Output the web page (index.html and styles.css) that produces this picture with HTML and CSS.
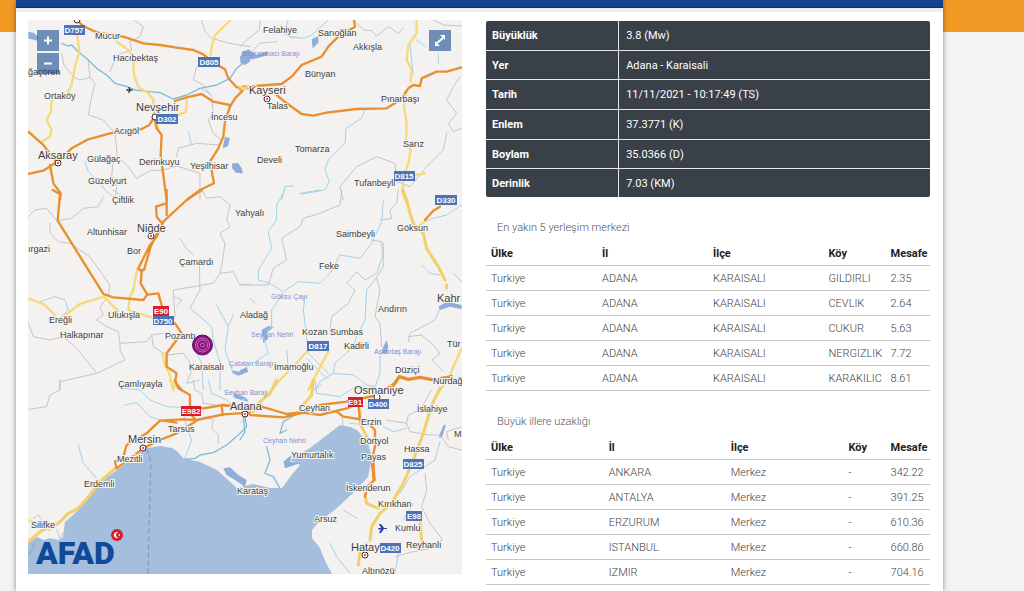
FILE: index.html
```html
<!DOCTYPE html>
<html lang="tr">
<head>
<meta charset="utf-8">
<title>AFAD Deprem Bilgisi</title>
<link rel="stylesheet" href="styles.css">
</head>
<body>
<div class="page">
<main class="panel">
<div class="topbar"></div>
<div class="content">
<section class="map">
<svg class="map-canvas" viewBox="28 20 434 554" role="img" aria-label="Harita">
  <rect class="land" x="28" y="20" width="434" height="554"/>
  <path class="sea" d="M28 574V543L37 537 44 540 50 538 58 540 63 537 65 522 72 516 80 508 95 488 106 478 117 470 133 458 147 448 160 446 172 448 178 452 183 458 200 462 217 470 237 488 253 484 270 488 282 488 290 477 300 465 290 460 310 448 327 435 340 425 350 427 357 430 368 443 372 458 368 477 353 493 337 508 318 523 312 530 312 538 320 548 325 561 332 574Z"/>
  <path class="ferry" d="M147 449L151 462 150 490 148 574"/>
  <path class="ferry" d="M29 555L36 541"/>

  <g transform="scale(.3333)">
    <path class="lake" d="M85 95L100 98 115 110 112 122 95 118 85 116ZM735 155L750 150V185L735 195 722 190 720 170ZM675 410L690 415 684 438 668 445ZM697 490L715 490 725 505 728 520 708 518 696 505Z"/>
    <path class="border" d="M185 160L192 195 220 230 240 240 270 232 285 250 275 290 265 345 310 360 345 400 352 470 385 500 410 535 450 512 490 510 530 498 600 520 600 600M265 185L270 232M405 62L430 80 420 110 390 125 395 150 350 165 330 215M605 60L615 95 635 115 690 130 750 140M590 200L580 240 610 255 635 290 640 340 625 360 640 400 665 420M530 470L535 445 590 430 660 435M340 475L335 530 350 560 345 600"/>
    <path class="river" d="M565 395L575 435M255 485L265 515 290 540 320 575 355 600M600 265L630 280"/>
    <path class="river thick" d="M185 130L205 138 215 135 235 155 265 180 290 205 320 225 345 250 375 258 405 270 450 275 480 278 520 297 560 285 600 265 650 255 690 235 710 205 735 185"/>
    <path class="yellow" d="M232 105L238 155 225 200 215 255 195 290M350 125L385 150 400 175 402 225 415 260 445 280 460 300 462 345 475 385M155 300L153 335 140 360 155 390 150 410 125 425M690 62L645 105 635 140 632 165M560 300L558 335 535 345"/>
    <path class="orange" d="M230 60L250 78 290 97 370 110 430 130 480 135 530 143 580 150 610 163 640 188 675 208 685 235 710 262 750 266M728 272L705 295 690 320 675 365 670 410 655 445 630 485 642 550 600 570 560 600M525 303L560 292 605 282 640 305 690 315M85 395L130 435 170 488 215 445 265 418 330 400 390 392 425 387 448 375 462 352M462 352L470 385 485 405 482 465 500 600M85 522L130 512 165 490M150 495L160 550 182 580 180 600"/>
    <path class="yellow" d="M738 262H750"/>
  </g>
  <g transform="translate(240 0) scale(.3333)">
    <path class="lake" d="M215 118L235 108 235 128 218 145ZM5 158L25 148 50 165 80 155 85 165 50 175 20 180 5 190ZM0 510H7V520H0Z"/>
    <path class="border" d="M60 62L58 90 20 120 0 140M145 60L130 100 160 115M350 70L370 90 395 92 410 108 445 80 475 100 490 85M580 60L610 75 665 78M660 230L640 260 620 300 650 340 625 370 640 395 665 385M620 400L610 450 560 500 510 560 470 545 465 490 410 470 350 500 300 560 310 600M30 160L60 130 110 125"/>
    <path class="river" d="M265 60L215 105 190 115 150 110M375 330L365 355 318 385 315 430 265 480 255 510 268 545 255 570 185 582M160 558L135 560 125 600M530 120L560 142M510 130L515 180 520 220M595 160V190"/>
    <path class="yellow" d="M530 62L530 100 505 135 500 180 515 210 512 245M500 275L492 320 500 370 498 420 512 450 505 490 490 530 488 575 495 600M525 525L555 520"/>
    <path class="orange" d="M0 268L10 260 85 255 125 252 155 230 185 195 245 170 265 140 295 110 345 80 342 60M110 285L140 310 185 342 220 347 260 338 350 327 440 325 480 300 505 265 520 255 540 258 545 235 590 215 620 215 665 202"/>
    <path class="yellow" d="M0 262L18 266M18 258L30 262"/>
  </g>
  <g transform="translate(0 190) scale(.3333)">
    <path class="lake" d="M695 540L715 545 740 530 745 545 715 557 698 550Z"/>
    <path class="border" d="M85 80L105 60 140 55 170 92 215 85 250 55 295 50 310 20M150 100L150 130 175 155 210 160 270 200 305 250 330 285 325 315M320 325L300 350 310 375 290 390 320 410 355 425 360 460 440 455 455 435 490 430M85 400L100 440 150 450 190 440 230 475 290 550 375 510 360 480 360 460M290 550L180 575 178 600M605 0L620 25 660 20 690 45 680 90 690 110 660 130 675 160 665 230 660 250 700 245 720 285 750 285M660 250L640 280 580 290 520 300 525 380M455 435L460 470 500 495 550 490 580 530 560 580 600 570M530 350L545 330 525 320"/>
    <path class="river" d="M540 145L555 170 580 195M598 220L600 300 570 355 600 380 635 410 640 450 660 520 660 600M650 345L685 410 700 375M685 410L675 480 700 550M120 335L165 320 195 330 205 360 180 385M585 480L605 520 610 600M340 0L370 20"/>
    <path class="yellow" d="M85 326L130 342 165 375M190 380L240 342 312 320 355 365M412 235L400 300 390 320 385 360 455 382M487 490L495 525 508 550 520 600"/>
    <path class="orange" d="M158 0L180 12 173 92 310 312 340 322 430 330 442 314 475 310 485 345 490 380M525 400L545 430 500 490 500 530 530 550 525 575 545 600M500 0L500 75M498 40L468 50 470 80 485 98M605 0L560 30 490 95 470 140 450 165 430 205 415 235 425 245 422 280 442 314M480 110L452 170 432 240 418 240"/>
  </g>
  <g transform="translate(240 190) scale(.3333)">
    <path class="lake" d="M65 420L85 408 100 412 80 430 85 445 70 460ZM430 470L440 450 445 470 440 490 425 490ZM595 350L620 335 665 345V358L630 350 600 360ZM0 540L20 535 5 555Z"/>
    <path class="border" d="M305 0L300 45 240 70 190 85 180 110 125 145 140 210 100 235 85 285 30 285 0 282M475 0L470 40 450 60 455 85 420 90M395 150L425 155 428 200 410 250 375 270 350 245 320 280 345 300 325 340 275 380 270 420M410 265L420 300 405 380 420 400 425 470M505 440L545 435 580 465 600 490 575 510 610 545M640 250L665 275"/>
    <path class="river" d="M135 0L110 45 110 90 85 125 95 175 55 240 55 270 90 280 130 305 175 275 240 280 270 250 300 195 360 205 395 160 425 95 430 30M180 10L240 0M195 320L190 360 200 440 205 490 265 550M430 160L430 230 405 270 380 300 375 390 350 440 340 470 285 520 280 550 240 575 225 600M545 225L570 250 600 255M555 95L580 85 620 75 665 45M600 355L585 390 510 430 505 455M30 325L45 340M130 310L95 360 95 410 70 440 85 490 40 520M140 480L145 540M280 550L340 555 380 585 405 590 420 550 420 490M200 505L260 565"/>
    <path class="yellow wide" d="M488 0L500 30 510 70 520 100 550 130 560 175 595 230 615 270M620 285V295"/>
    <path class="yellow" d="M540 105L560 90M200 485L160 530 120 570 95 600M265 485L225 560 205 600M665 475L640 530 625 570 600 600"/>
    <path class="orange" d="M555 90L580 62 600 50"/>
    <path class="orange wide" d="M450 600L478 560 505 568 540 562 580 570 635 560"/>
  </g>
  <g transform="translate(0 380) scale(.3333)">
    <path class="lake" d="M670 265L690 262 715 285 740 300 735 320 705 300 680 285Z"/>
    <path class="lake" d="M700 40L720 45 740 55 745 65 705 55Z"/>
    <path class="border" d="M180 0L180 30 150 45 140 80 85 88M580 0L585 30 605 40 610 70 680 80M615 110L640 120 635 145 655 165 655 190M100 415L115 405 125 418M170 450L180 475 195 450"/>
    <path class="river" d="M370 25L420 30 450 60 500 80 545 82M375 75L410 68 450 110 490 122M235 195L250 250 290 295M550 100L560 140 575 180 555 235M625 0L635 40 680 60 700 80"/>
    <path class="river thick" d="M555 238L585 235 600 225 640 218 680 195 715 165 740 140 735 110"/>
    <path class="yellow wide" d="M85 485L125 452 175 430 205 400 235 385 270 345 300 305 345 265"/>
    <path class="yellow" d="M85 420L115 432 150 450M510 0L525 20"/>
    <path class="orange" d="M525 0L535 25 570 45 570 80 610 85 670 75 750 85M665 75L668 105M750 98L670 103 590 120 545 118 480 122 440 160 380 195 370 230 345 245 350 265 390 235 430 205 480 180 530 160 590 122 570 100M490 122L530 128"/>
  </g>
  <g transform="translate(240 380) scale(.3333)">
    <path class="lake" d="M598 165L612 133 617 137 607 170 598 175ZM130 245L155 225 150 245 180 250 135 265Z"/>
    <path class="border" d="M305 110L310 135M440 120L500 130 510 155 570 165 600 165 625 200 665 210M500 130L505 105 540 90 575 30M665 140L620 155 625 180M555 280L560 330 545 380 570 430 605 475 600 500 520 515 465 530M0 130L20 110M330 130L380 135"/>
    <path class="river" d="M5 60L20 55M225 0L230 40 300 50 340 25 400 25M220 30L245 15M600 185L585 240 510 290 480 340M430 140L460 155 500 145M270 490L290 530 330 580M310 390L350 415M475 520L465 580M490 420L520 370"/>
    <path class="river thick" d="M165 105L130 125 120 160 140 150M80 200L90 240 75 280 100 290 120 325M10 110L15 155 0 180"/>
    <path class="yellow wide" d="M110 0L90 40 60 65 40 95M220 0L215 45 185 80M600 25L575 75 550 160 520 240 490 310 455 370 420 400 395 440 390 480M540 430L545 480M375 345L380 370 415 385M360 90L360 130 385 180M360 520L355 555"/>
    <path class="orange" d="M30 85L65 80 140 102 180 97 240 75 320 65 400 48 440 25 470 5M30 105L130 112 190 98 240 105 320 85 345 75M290 95L310 110 375 120 405 150 405 200 395 240 403 300 382 320 375 350M355 70L360 120"/>
    <path class="orange wide" d="M398 235L402 300"/>
  </g>

  <g class="town">
    <circle cx="77" cy="20" r="3"/><circle cx="58" cy="163" r="3"/><circle cx="155" cy="117" r="3"/><circle cx="267" cy="99" r="3"/><circle cx="151" cy="236" r="3"/><circle cx="143" cy="448" r="3"/><circle cx="245" cy="414" r="3"/><circle cx="365" cy="555" r="3"/><circle cx="377" cy="397" r="3"/>
  </g>
  <g class="town-dot">
    <circle cx="58" cy="163" r="1"/><circle cx="267" cy="99" r="1"/><circle cx="151" cy="236" r="1"/><circle cx="143" cy="448" r="1"/><circle cx="245" cy="414" r="1"/><circle cx="365" cy="555" r="1"/>
  </g>
  <path class="plane" d="M126 89L129 89.500 128 87H129L131 89.500H133V90.500H131L129 93H128L129 90.500 127 91Z"/>
  <path class="plane blue" d="M378 528L381 528 379 524H381L384 528H387V529H384L381 533H379L381 529 379 530Z"/>

  <g class="water-name">
    <text x="242" y="56">Bayramhacı Barajı</text><text x="271" y="299">Göksu Çayı</text><text x="251" y="337">Seyhan Nehri</text><text x="229" y="366">Çatalan Barajı</text><text x="224" y="395">Seyhan Barajı</text><text x="374" y="354">Aslantaş Barajı</text><text x="263" y="443">Ceyhan Nehri</text>
  </g>
  <g class="place">
    <text x="95" y="39">Mucur</text><text x="113" y="61">Hacıbektaş</text><text x="28" y="75">ğaçören</text><text x="44" y="99">Ortaköy</text><text x="211" y="120">İncesu</text><text x="114" y="134">Acıgöl</text><text x="87" y="162">Gülağaç</text><text x="139" y="165">Derinkuyu</text><text x="190" y="169">Yeşilhisar</text><text x="88" y="184">Güzelyurt</text><text x="112" y="203">Çiftlik</text>
    <text x="263" y="33">Felahiye</text><text x="318" y="36">Sarıoğlan</text><text x="353" y="50">Akkışla</text><text x="305" y="77">Bünyan</text><text x="267" y="109">Talas</text><text x="381" y="102">Pınarbaşı</text><text x="403" y="147">Sarız</text><text x="295" y="152">Tomarza</text><text x="257" y="163">Develi</text><text x="354" y="186">Tufanbeyli</text>
    <text x="235" y="216">Yahyalı</text><text x="87" y="235">Altunhisar</text><text x="28" y="252">ırgazi</text><text x="127" y="254">Bor</text><text x="179" y="265">Çamardı</text><text x="49" y="323">Ereğli</text><text x="108" y="318">Ulukışla</text><text x="60" y="338">Halkapınar</text><text x="165" y="339">Pozantı</text><text x="189" y="370">Karaisalı</text><text x="118" y="387">Çamlıyayla</text>
    <text x="336" y="237">Saimbeyli</text><text x="397" y="231">Göksun</text><text x="319" y="269">Feke</text><text x="240" y="318">Aladağ</text><text x="378" y="312">Andırın</text><text x="302" y="335">Kozan</text><text x="330" y="335">Sumbas</text><text x="344" y="349">Kadirli</text><text x="274" y="370">İmamoğlu</text><text x="395" y="373">Düziçi</text><text x="447" y="347">Tür</text><text x="433" y="384">Nurdağ</text>
    <text x="168" y="432">Tarsus</text><text x="117" y="462">Mezitli</text><text x="84" y="487">Erdemli</text><text x="31" y="528">Silifke</text><text x="237" y="494">Karataş</text><text x="299" y="411">Ceyhan</text><text x="291" y="458">Yumurtalık</text><text x="361" y="425">Erzin</text><text x="360" y="444">Dörtyol</text><text x="361" y="460">Payas</text><text x="417" y="412">İslahiye</text><text x="404" y="452">Hassa</text><text x="346" y="491">İskenderun</text><text x="378" y="507">Kırıkhan</text><text x="314" y="522">Arsuz</text><text x="395" y="531">Kumlu</text><text x="406" y="548">Reyhanlı</text><text x="362" y="574">Altınözü</text><text x="454" y="437">M</text>
  </g>
  <g class="city">
    <text x="136" y="111">Nevşehir</text><text x="38" y="159">Aksaray</text><text x="249" y="94">Kayseri</text><text x="137" y="232">Niğde</text><text x="437" y="302">Kahr</text><text x="128" y="443">Mersin</text><text x="230" y="410">Adana</text><text x="354" y="394">Osmaniye</text><text x="351" y="551">Hatay</text>
  </g>
  <g class="shield">
    <rect x="64" y="25" width="21" height="10"/><rect x="198" y="57" width="22" height="10"/><rect x="156" y="114" width="22" height="10"/><rect x="394" y="171" width="21" height="10"/><rect x="435" y="195" width="22" height="10"/><rect x="153" y="316" width="21" height="9"/><rect x="307" y="341" width="22" height="10"/><rect x="368" y="399" width="21" height="10"/><rect x="403" y="459" width="21" height="10"/><rect x="406" y="511" width="16" height="10"/><rect x="380" y="543" width="21" height="10"/>
    <rect class="red" x="153" y="306" width="16" height="10"/><rect class="red" x="181" y="406" width="20" height="10"/><rect class="red" x="348" y="397" width="15" height="10"/>
  </g>
  <g class="shield-text">
    <text x="74" y="33">D757</text><text x="209" y="65">D805</text><text x="167" y="122">D302</text><text x="404" y="179">D815</text><text x="446" y="203">D330</text><text x="163" y="324">D750</text><text x="318" y="349">D817</text><text x="378" y="407">D400</text><text x="413" y="467">D825</text><text x="414" y="519">E98</text><text x="390" y="551">D420</text><text x="161" y="314">E90</text><text x="191" y="414">E982</text><text x="355" y="405">E91</text>
  </g>

  <g class="epicenter">
    <circle class="disc" cx="202.500" cy="345" r="10"/><circle cx="202.500" cy="345" r="7"/><circle cx="202.500" cy="345" r="5"/><circle cx="202.500" cy="345" r="2"/>
  </g>
  <text class="brand" x="36" y="564">AFAD</text>
  <circle class="flag" cx="117" cy="535" r="6"/>
  <path class="crescent" d="M118.500 532.500A3 3 0 1 0 118.500 537.500 2.500 2.500 0 1 1 118.500 532.500ZM118 535L120 534V536Z"/>
</svg>
<div class="zoom">
  <button class="map-btn" type="button" aria-label="Yakınlaştır"><svg viewBox="0 0 22 21"><path d="M7 10.500H15M11 6.500V14.500"/></svg></button>
  <button class="map-btn" type="button" aria-label="Uzaklaştır"><svg viewBox="0 0 22 21"><path d="M7 10.500H15"/></svg></button>
</div>
<button class="map-btn full" type="button" aria-label="Tam ekran"><svg viewBox="0 0 22 21"><path d="M8 13L14 8"/><path class="solid" d="M11 5H16V10ZM6 11V16H11Z"/></svg></button>
</section>

<section class="info">
<table class="summary">
<tr><th scope="row">Büyüklük</th><td>3.8 (Mw)</td></tr>
<tr><th scope="row">Yer</th><td>Adana - Karaisali</td></tr>
<tr><th scope="row">Tarih</th><td>11/11/2021 - 10:17:49 (TS)</td></tr>
<tr><th scope="row">Enlem</th><td>37.3771 (K)</td></tr>
<tr><th scope="row">Boylam</th><td>35.0366 (D)</td></tr>
<tr><th scope="row">Derinlik</th><td>7.03 (KM)</td></tr>
</table>

<h2 class="title">En yakın 5 yerleşim merkezi</h2>
<table class="list near">
<thead><tr><th>Ülke</th><th>İl</th><th>İlçe</th><th>Köy</th><th>Mesafe</th></tr></thead>
<tbody>
<tr><td>Turkiye</td><td>ADANA</td><td>KARAISALI</td><td>GILDIRLI</td><td>2.35</td></tr>
<tr><td>Turkiye</td><td>ADANA</td><td>KARAISALI</td><td>CEVLIK</td><td>2.64</td></tr>
<tr><td>Turkiye</td><td>ADANA</td><td>KARAISALI</td><td>CUKUR</td><td>5.63</td></tr>
<tr><td>Turkiye</td><td>ADANA</td><td>KARAISALI</td><td>NERGIZLIK</td><td>7.72</td></tr>
<tr><td>Turkiye</td><td>ADANA</td><td>KARAISALI</td><td>KARAKILIC</td><td>8.61</td></tr>
</tbody>
</table>

<h2 class="title">Büyük illere uzaklığı</h2>
<table class="list far">
<thead><tr><th>Ülke</th><th>İl</th><th>İlçe</th><th>Köy</th><th>Mesafe</th></tr></thead>
<tbody>
<tr><td>Turkiye</td><td>ANKARA</td><td>Merkez</td><td>-</td><td>342.22</td></tr>
<tr><td>Turkiye</td><td>ANTALYA</td><td>Merkez</td><td>-</td><td>391.25</td></tr>
<tr><td>Turkiye</td><td>ERZURUM</td><td>Merkez</td><td>-</td><td>610.36</td></tr>
<tr><td>Turkiye</td><td>ISTANBUL</td><td>Merkez</td><td>-</td><td>660.86</td></tr>
<tr><td>Turkiye</td><td>IZMIR</td><td>Merkez</td><td>-</td><td>704.16</td></tr>
</tbody>
</table>
</section>
</div>
</main>
</div>
</body>
</html>
```

FILE: styles.css
```css
* { box-sizing: border-box; }
body {
  margin: 0;
  background: #f3f3f3;
  font-family: Roboto, "Open Sans", sans-serif;
  font-size: 11px;
  color: #444;
}
.page {
  padding: 0 81px 0 16px;
  min-height: 100vh;
  background: linear-gradient(#f29a26, #f29a26) top / 100% 32px no-repeat;
}
.panel {
  min-height: 100vh;
  background: #fff;
  box-shadow: 0 0 5px rgba(0, 0, 0, .45);
}
.topbar {
  height: 8px;
  background: #174292;
  border-bottom: 1px solid #12306c;
  box-shadow: 0 4px 0 #e9eeec;
}
.content {
  display: grid;
  grid-template-columns: 434fr 444fr;
  gap: 24px;
  align-items: start;
  padding: 12px 13px 5px 12px;
}

/* Map */
.map { position: relative; overflow: hidden; }
.map-canvas { display: block; width: 100%; height: auto; font-family: "Liberation Sans", Arial, sans-serif; }
.land { fill: #f3f2f0; }
.sea { fill: #a6bedd; }
.lake { fill: #8eaddb; }
.ferry { fill: none; stroke: #7e96b8; stroke-width: 1; stroke-dasharray: 5 3; }
.border, .river, .yellow, .orange { fill: none; stroke-linejoin: round; stroke-linecap: round; }
.border { stroke: #c6c4c6; stroke-width: 3; }
.river { stroke: #a0d2e8; stroke-width: 3; }
.river.thick { stroke: #7fbcd6; stroke-width: 4; }
.yellow { stroke: #f6d978; stroke-width: 7; }
.yellow.wide { stroke: #f3cf6a; stroke-width: 9; }
.orange { stroke: #e98f2f; stroke-width: 7; }
.orange.wide { stroke-width: 10; }
.town { fill: #fff; stroke: #4a2222; stroke-width: 1; }
.town-dot { fill: #c22; }
.plane { fill: #333; }
.plane.blue { fill: #2b3fa5; }
.place, .city { fill: #3d3d3d; stroke: #f6f5f3; stroke-width: 2px; paint-order: stroke; stroke-linejoin: round; }
.place { font-size: 9px; }
.city { font-size: 11px; }
.water-name { font-size: 7px; fill: #7c92d0; }
.shield { fill: #4a73b8; }
.shield .red { fill: #d3202a; }
.shield-text { fill: #fff; font-size: 8px; font-weight: 700; text-anchor: middle; }
.epicenter { fill: none; stroke: #d070c0; stroke-width: 1; }
.epicenter .disc { fill: #85127a; stroke: #6b0c66; }
.brand { font-family: Roboto, sans-serif; font-size: 32px; font-weight: 900; fill: #11499a; }
.flag { fill: #d81f2a; }
.crescent { fill: #fff; }

.zoom { position: absolute; left: 9px; top: 10px; display: grid; gap: 2px; }
.map-btn {
  display: block;
  width: 22px;
  height: 21px;
  padding: 0;
  border: 0;
  background: rgba(0, 60, 136, .55);
}
.map-btn svg { display: block; fill: none; stroke: #fff; stroke-width: 2; }
.map-btn .solid { fill: #fff; stroke: none; }
.full { position: absolute; right: 11px; top: 10px; }

/* Event summary */
.summary {
  width: 100%;
  height: 176px;
  margin-top: 1px;
  border-collapse: separate;
  border-spacing: 0;
  border-radius: 2px;
  overflow: hidden;
  background: #394047;
  color: #fff;
  table-layout: fixed;
}
.summary th, .summary td { padding: 0 7px; text-align: left; border-bottom: 1px solid #e4e8e8; }
.summary th { width: 30%; padding-left: 6px; border-right: 1px solid #e4e8e8; }
.summary tr:last-child > * { border-bottom: 0; }
.summary th { font-weight: 700; }

/* Distance lists */
.title { margin: 21px 0 3px 11px; font-size: 11px; line-height: 20px; font-weight: 300; color: #555; }
.list { width: 100%; table-layout: fixed; border-collapse: separate; border-spacing: 0; }
.list th, .list td { height: 25px; padding: 1px 0 0 5px; text-align: left; border-bottom: 1px solid #c6c6c6; white-space: nowrap; }
.list th { font-weight: 700; color: #222; }
.list td { font-weight: 300; }
.near th { width: 25%; }
.near th:nth-child(3) { width: 26%; }
.near th:nth-child(4) { width: 14%; }
.near th:nth-child(5) { width: 10%; }
.far th { width: 26.5%; }
.far th:nth-child(2) { width: 27.5%; }
.far th:nth-child(4) { width: 9.5%; }
.far th:nth-child(5) { width: 10%; }
```
